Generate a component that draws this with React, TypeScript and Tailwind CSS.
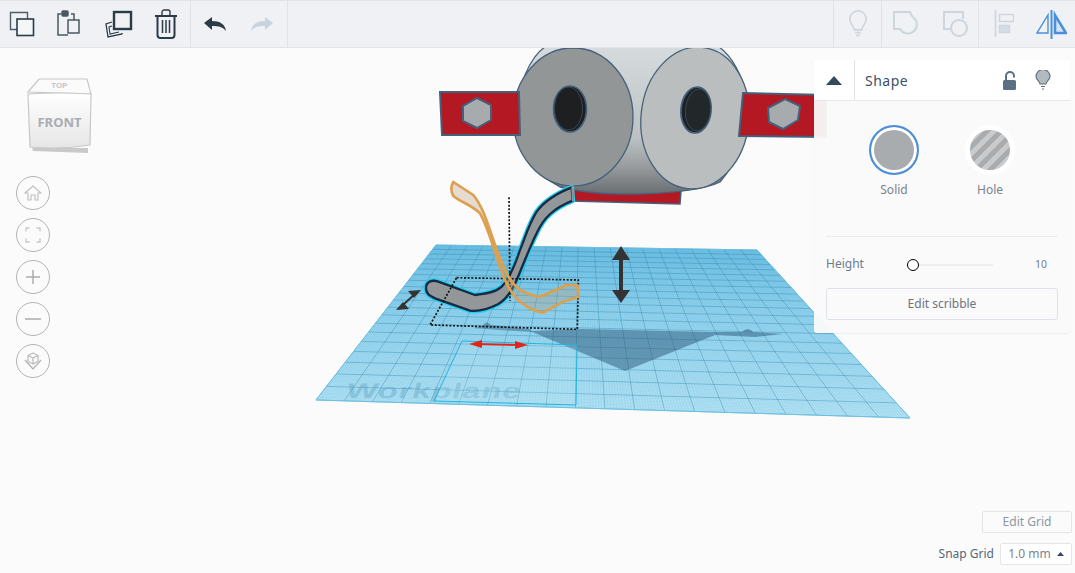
import React from "react";

type P = [number, number];
const Q: P[] = [[436, 245], [757, 250], [910, 418], [316, 400]];
function homography(q: P[]) {
  const [[x0, y0], [x1, y1], [x2, y2], [x3, y3]] = q;
  const dx1 = x1 - x2, dx2 = x3 - x2, sx = x0 - x1 + x2 - x3;
  const dy1 = y1 - y2, dy2 = y3 - y2, sy = y0 - y1 + y2 - y3;
  const d = dx1 * dy2 - dx2 * dy1;
  const g = (sx * dy2 - dx2 * sy) / d;
  const h = (dx1 * sy - sx * dy1) / d;
  const a = x1 - x0 + g * x1, b = x3 - x0 + h * x3, c = x0;
  const e = y1 - y0 + g * y1, f = y3 - y0 + h * y3, i = y0;
  return (u: number, v: number): P => {
    const w = g * u + h * v + 1;
    return [(a * u + b * v + c) / w, (e * u + f * v + i) / w];
  };
}
const map = homography(Q);
const N = 20;
function gridPath(step: number, major: boolean) {
  let s = "";
  for (let k = 0; k <= N * step; k++) {
    const onMajor = k % step === 0;
    if (onMajor !== major) continue;
    const t = k / (N * step);
    const a = map(t, 0), b = map(t, 1), c = map(0, t), d = map(1, t);
    s += `M${a[0].toFixed(1)} ${a[1].toFixed(1)}L${b[0].toFixed(1)} ${b[1].toFixed(1)}M${c[0].toFixed(1)} ${c[1].toFixed(1)}L${d[0].toFixed(1)} ${d[1].toFixed(1)}`;
  }
  return s;
}

const TUBE =
  "M545 52 C505 68 465 90 440 125 C415 165 405 205 390 240 C375 285 360 325 335 350 C315 368 285 372 255 375 L145 335 C125 328 108 335 108 355 C108 372 120 378 135 385 L240 422 C265 425 300 415 325 402 C345 390 362 370 378 335 C395 295 420 230 440 190 C460 145 490 115 548 92 Z";

function Scene() {
  return (
    <svg className="absolute inset-0" width={1075} height={573} viewBox="0 0 1075 573">
      <defs>
        <linearGradient id="body" x1="0" y1="0" x2="0" y2="1">
          <stop offset="0" stopColor="#d6dcde" />
          <stop offset="0.62" stopColor="#bcc1c3" />
          <stop offset="0.82" stopColor="#979b9d" />
          <stop offset="1" stopColor="#686d71" />
        </linearGradient>
        <linearGradient id="plane" x1="0" y1="0" x2="0" y2="1">
          <stop offset="0" stopColor="#7ccbec" />
          <stop offset="0.35" stopColor="#9ad9f2" />
          <stop offset="1" stopColor="#b9e6f6" />
        </linearGradient>
        <linearGradient id="cube" x1="0" y1="0" x2="0" y2="1">
          <stop offset="0" stopColor="#ffffff" />
          <stop offset="1" stopColor="#e6e6e6" />
        </linearGradient>
      </defs>

      {/* workplane */}
      <polygon points={Q.map((p) => p.join(",")).join(" ")} fill="url(#plane)" />
      <path d={gridPath(10, false)} stroke="#3f9cc6" strokeOpacity={0.22} strokeWidth={0.5} fill="none" />
      <path d={gridPath(10, true)} stroke="#2b83ad" strokeOpacity={0.55} strokeWidth={0.8} fill="none" />
      <polygon points={Q.map((p) => p.join(",")).join(" ")} fill="none" stroke="#6cc2e4" strokeWidth={1} />
      <text
        transform="translate(345,398) skewX(-14) scale(1.57,1)"
        fontFamily="Liberation Sans"
        fontWeight="700"
        fontSize={21}
        letterSpacing={0.5}
        fill="#5a9cbc"
        fillOpacity={0.38}
      >
        Workplane
      </text>

      {/* shadow */}
      <path d="M472 328 Q481 327 483 325 Q487 320 491 325 L530 329 L532 332 L500 330 Z" fill="#2c5878" fillOpacity={0.45} />
      <path
        d="M530 331 L582 329 L712 332 L742 332 Q748 326 753 332 L783 334 L755 337 L715 335 L625 371 Z"
        fill="#2c5878"
        fillOpacity={0.5}
      />

      {/* footprint */}
      <polygon points="462,341 577,345 576,405 434,401" fill="#bce8f7" fillOpacity={0.2} stroke="#22b4dc" strokeWidth={1} />

      {/* robot body */}
      <polygon points="572,188 681,191 680,204 572,201" fill="#b31823" stroke="#45607a" strokeWidth={1.5} />
      <path
        d="M525 75 Q533 55 546 46 L718 46 Q740 62 747 100 Q748 150 720 182 Q700 192 640 194 Q590 195 560 187 Q530 170 525 150 Z"
        fill="url(#body)"
        stroke="#47617b"
        strokeWidth={1.3}
      />
      <ellipse cx={695} cy={118} rx={54} ry={71} transform="rotate(6 695 118)" fill="#bbbebf" stroke="#47617b" strokeWidth={1.3} />
      <ellipse cx={573} cy={117} rx={60} ry={69} fill="#939696" stroke="#47617b" strokeWidth={1.3} />
      <ellipse cx={570} cy={109} rx={16.500} ry={23} fill="#1d1f21" stroke="#45607a" strokeWidth={1.6} />
      <ellipse cx={568.500} cy={108.500} rx={14} ry={21.500} fill="#1d1f21" stroke="#3a4f64" strokeWidth={0.8} />
      <ellipse cx={696} cy={110} rx={15} ry={23} transform="rotate(5 696 110)" fill="#1d2124" stroke="#45607a" strokeWidth={1.8} />
      <ellipse cx={698} cy={110} rx={12.500} ry={21} transform="rotate(5 698 110)" fill="#22272a" stroke="#3a4f64" strokeWidth={0.8} />

      {/* tabs */}
      <polygon points="440,92 519,92 520,135 442,135" fill="#b31823" stroke="#45607a" strokeWidth={2} />
      <polygon points="477,98 491,105 491,120 477,128 463,121 463,106" fill="#a7abae" stroke="#45607a" strokeWidth={2} />
      <polygon points="743,93 826,95 826,137 739,136" fill="#b31823" stroke="#45607a" strokeWidth={2} />
      <polygon points="785,99 800,106 798,120 783,129 769,122 768,108" fill="#a7abae" stroke="#45607a" strokeWidth={2} />

      {/* selected scribble, drawn in 3x coordinates */}
      <g transform="translate(390,170) scale(0.3333)">
        <path d={TUBE} fill="#94979a" stroke="#24d0f3" strokeWidth={15} strokeLinejoin="round" />
        <path d={TUBE} fill="#94979a" stroke="#172a40" strokeWidth={7} strokeLinejoin="round" />
        <path d="M547 50 L549 94" stroke="#94979a" strokeWidth={6} />

        {/* dotted guides */}
        <polygon points="200,323 565,330 562,478 120,465" fill="none" stroke="#111" strokeWidth={5} strokeDasharray="6 5" />
        <path d="M357 82 L360 392" stroke="#111" strokeWidth={5} strokeDasharray="6 5" fill="none" />

        {/* ghost */}
        <path
          d="M190 36 L250 75 C275 105 290 150 310 210 C325 255 340 290 358 325 C380 360 410 375 450 380 L530 345 L562 345 L566 380 L520 395 L460 428 C430 425 400 405 378 385 C350 350 335 310 318 255 C300 200 290 165 270 130 C245 105 210 95 190 78 C183 65 183 48 190 36 Z"
          fill="#b89a78"
          fillOpacity={0.33}
          stroke="#dca04f"
          strokeWidth={8}
          strokeLinejoin="round"
        />
      </g>

      {/* arrows */}
      <g fill="#333" stroke="#333">
        <path d="M621 252 L621 297" strokeWidth={4} />
        <polygon points="621,246 630,260 612,260" strokeWidth={0} />
        <polygon points="621,303 630,290 612,290" strokeWidth={0} />
        <path d="M403 305 L416 293" strokeWidth={2} />
        <polygon points="421,290 408,291 414,298" strokeWidth={0} />
        <polygon points="396,310 409,309 403,302" strokeWidth={0} />
      </g>
      <g fill="#e32518" stroke="#e32518">
        <path d="M475 344 L522 345" strokeWidth={2} />
        <polygon points="469,344 482,340 482,348" strokeWidth={0} />
        <polygon points="528,345 515,341 515,349" strokeWidth={0} />
      </g>

      {/* view cube */}
      <polygon points="32,148 88,148 88,153 33,151" fill="#c9c9c9" />
      <polygon points="28,92 39,79 87,79 91,94" fill="#fbfbfb" stroke="#c8c8c8" strokeWidth={1.2} />
      <path d="M28 94 Q60 92 91 94 L90 145 Q60 150 30 147 Z" fill="url(#cube)" stroke="#c8c8c8" strokeWidth={1.2} />
      <text x={59.500} y={88} textAnchor="middle" fontFamily="Liberation Sans" fontSize={8} fontWeight="700" fill="#c4c4c4">TOP</text>
      <text x={59.500} y={127} textAnchor="middle" fontFamily="Noto Sans" fontSize={13} fontWeight="700" fill="#aaadb2">FRONT</text>
    </svg>
  );
}

const IC = "#2b3b47";
function TopIcon({ children, w }: { children: React.ReactNode; w: string }) {
  return <div className={`flex items-center justify-center h-full ${w}`}>{children}</div>;
}

function Toolbar() {
  return (
    <div className="relative z-10 flex h-[48px] shrink-0 items-stretch justify-between border-y border-[#e2e4e8] bg-[#f0f1f5]">
      <div className="flex">
        <div className="flex w-[191px] border-r border-[#dfe2e6]">
          <TopIcon w="w-[44px]">
            <svg width="26" height="26" viewBox="0 0 26 26" fill="none" stroke={IC} strokeWidth="1.400">
              <path d="M8 18.500H1.500V1.500h17V8" stroke="#4f5c66" />
              <rect x="8" y="8" width="16.500" height="16.500" fill="#f5f6f8" strokeWidth="1.600" />
            </svg>
          </TopIcon>
          <TopIcon w="w-[48px]">
            <svg width="24" height="28" viewBox="0 0 24 28" fill="none" stroke="#4a5860" strokeWidth="1.500">
              <path d="M5 4H2v21h10M15 4h3v6" />
              <rect x="6" y="1" width="6" height="5" fill="#4a5860" rx="1" />
              <rect x="12" y="10" width="11" height="13" fill="#f0f1f5" />
            </svg>
          </TopIcon>
          <TopIcon w="w-[52px]">
            <svg width="30" height="30" viewBox="0 0 30 30" fill="none" stroke={IC}>
              <rect x="11" y="3" width="17" height="17" strokeWidth="2.400" fill="#f0f1f5" />
              <path d="M9 13L3 15l2 13 14-3 0-1" strokeWidth="1.300" />
              <path d="M9 17l-3 1 1 7 9-2" strokeWidth="1.100" />
            </svg>
          </TopIcon>
          <TopIcon w="w-[44px]">
            <svg width="24" height="30" viewBox="0 0 24 30" fill="none" stroke={IC} strokeWidth="2">
              <path d="M1 7h22" />
              <path d="M8 6V3c0-1 1-2 2-2h4c1 0 2 1 2 2v3" strokeWidth="1.400" />
              <path d="M3.500 8v18c0 2 1 3 3 3h11c2 0 3-1 3-3V8" />
              <path d="M8.500 11v13M12 11v13M15.500 11v13" strokeWidth="1.500" />
            </svg>
          </TopIcon>
        </div>
        <div className="flex w-[97px] items-center gap-[25px] border-r border-[#dfe2e6] pl-[13px]">
          <svg width="22" height="14" viewBox="0 0 22 14" fill={IC}>
            <path d="M0 6L8 0v4c8 0 13 3 14 10-3-4-7-5-14-5v4z" />
          </svg>
          <svg width="22" height="14" viewBox="0 0 22 14" fill="#c9d3de">
            <path d="M22 6L14 0v4C6 4 1 7 0 14c3-4 7-5 14-5v4z" />
          </svg>
        </div>
      </div>
      <div className="flex">
        <div className="flex w-[49px] items-center justify-center border-x border-[#dfe2e6]">
          <svg width="20" height="28" viewBox="0 0 22 29" fill="none" stroke="#cdd5dd" strokeWidth="1.800">
            <path d="M7 21c0-4-5-6-5-12a9 9 0 0 1 18 0c0 6-5 8-5 12z" />
            <path d="M8 24h6M9 27h4" />
          </svg>
        </div>
        <div className="flex w-[97px] items-center justify-center gap-[24px] border-r border-[#dfe2e6] pl-[2px]">
          <svg width="26" height="26" viewBox="0 0 26 26" fill="none" stroke="#cdd5dd" strokeWidth="2">
            <path d="M1 1h16q1 4 4 6a9 9 0 1 1-14 11H1z" />
          </svg>
          <svg width="26" height="26" viewBox="0 0 26 26" fill="none" stroke="#cdd5dd" strokeWidth="2">
            <path d="M9 18H1V1h19v7" />
            <circle cx="16" cy="17" r="8" />
          </svg>
        </div>
        <div className="flex w-[96px] items-center gap-[22px] pl-[15px] pr-[8px]">
          <svg width="20" height="28" viewBox="0 0 20 28" fill="#d6dde4" stroke="#cdd5dd">
            <path d="M1.500 0v27" strokeWidth="1.600" fill="none" />
            <rect x="5.500" y="4.500" width="14" height="7" fill="none" strokeWidth="1.500" />
            <rect x="5.500" y="15.500" width="10" height="7" strokeWidth="1.500" />
          </svg>
          <svg width="31" height="29" viewBox="0 0 31 29" fill="none" stroke="#4a8fd8">
            <path d="M15.500 0v29" strokeWidth="2" />
            <path d="M12 5v18H1z" strokeWidth="1.400" />
            <path d="M19 5v18h11z" strokeWidth="2.600" fill="#d5e3f3" />
          </svg>
        </div>
      </div>
    </div>
  );
}

function NavButton({ children }: { children: React.ReactNode }) {
  return (
    <div className="flex h-[34px] w-[34px] items-center justify-center rounded-full border border-[#b4b4b4] bg-[#fbfbfb]">
      {children}
    </div>
  );
}

function NavColumn() {
  const stroke = "#bdbdbd";
  return (
    <div className="absolute left-[16px] top-[128px] flex flex-col gap-[8px]">
      <NavButton>
        <svg width="18" height="18" viewBox="0 0 18 18" fill="none" stroke={stroke} strokeWidth="1.100">
          <path d="M1 9l8-7 8 7h-3v7h-3v-5H7v5H4V9z" />
        </svg>
      </NavButton>
      <NavButton>
        <svg width="16" height="16" viewBox="0 0 16 16" fill="none" stroke="#c8c8c8" strokeWidth="1.300">
          <path d="M1 4.500V1h3.500M11.500 1H15v3.500M15 11.500V15h-3.500M4.500 15H1v-3.500" />
        </svg>
      </NavButton>
      <NavButton>
        <svg width="14" height="14" viewBox="0 0 14 14" stroke="#adadad" strokeWidth="1.500">
          <path d="M7 0v14M0 7h14" />
        </svg>
      </NavButton>
      <NavButton>
        <svg width="16" height="4" viewBox="0 0 16 4" stroke="#adadad" strokeWidth="1.500">
          <path d="M0 2h16" />
        </svg>
      </NavButton>
      <NavButton>
        <svg width="20" height="20" viewBox="0 0 20 20" fill="none" stroke="#b5b5b5" strokeWidth="1.100">
          <path d="M10 2l5 2.500v6L10 13l-5-2.500v-6zM5 4.500L10 7l5-2.500M10 7v6" />
          <path d="M2 9l8 9 8-9" strokeWidth="1.400" />
        </svg>
      </NavButton>
    </div>
  );
}

function Panel() {
  return (
    <div className="absolute right-[5px] top-[12px] flex w-[256px] flex-col rounded-[3px] bg-[#fafafa]/95 shadow-[0_1px_2px_rgba(0,0,0,0.06)]">
      <div className="flex h-[41px] items-center border-b border-[#e6e8ec] bg-white">
        <div className="flex h-full w-[41px] items-center justify-center border-r border-[#e0e3e8]">
          <svg width="16" height="9" viewBox="0 0 16 9" fill="#34495e">
            <path d="M8 0l8 9H0z" />
          </svg>
        </div>
        <span className="ml-[10px] flex-1 text-[14px] tracking-[0.5px] text-[#3c5068]">Shape</span>
        <svg width="15" height="19" viewBox="0 0 15 19" fill="none" className="mr-[18px]">
          <path d="M4 9V5a4 4 0 0 1 8 0v1.500" stroke="#5a6f82" strokeWidth="2" />
          <rect x="1" y="9" width="13" height="10" rx="1.500" fill="#5a6f82" />
        </svg>
        <svg width="16" height="20" viewBox="0 0 16 20" fill="#b4b9be" stroke="#5a6f82" strokeWidth="1.100" className="mr-[19px]">
          <path d="M5 14c0-3-4-4-4-7.500a7 7 0 0 1 14 0c0 3.500-4 4.500-4 7.500z" />
          <path d="M6 16.500h4M7 19h2" fill="none" />
        </svg>
      </div>
      <div className="flex flex-col px-[12px] pb-[13px]">
        <div className="flex justify-center gap-[46px] border-b border-[#ebebeb] pb-[38px] pt-[24px]">
          <div className="flex w-[50px] flex-col items-center gap-[7px]">
            <div className="h-[50px] w-[50px] rounded-full border-[2px] border-[#4a8fd8] bg-[#a9acaf] shadow-[inset_0_0_0_3px_#ffffff]" />
            <span className="text-[12px] leading-[16px] text-[#7a838d]">Solid</span>
          </div>
          <div className="flex w-[50px] flex-col items-center gap-[7px]">
            <div className="h-[50px] w-[50px] rounded-full border-[5px] border-white bg-[repeating-linear-gradient(135deg,#a9acaf_0px,#a9acaf_5px,#c8cacc_5px,#c8cacc_10px)]" />
            <span className="text-[12px] leading-[16px] text-[#7a838d]">Hole</span>
          </div>
        </div>
        <div className="mt-[18px] flex h-[20px] items-center">
          <span className="w-[80px] -translate-y-[1px] text-[12px] text-[#6d7a88]">Height</span>
          <div className="relative h-[2px] w-[87px] bg-[#eeeeee]">
            <div className="absolute left-[1px] top-[-5px] h-[12px] w-[12px] rounded-full border border-black bg-white" />
          </div>
          <span className="ml-[42px] text-[10.500px] text-[#767f89]">10</span>
        </div>
        <div className="mt-[13px] flex h-[32px] items-center justify-center rounded-[3px] border border-[#dfe2e8] text-[12px] text-[#6a7582]">
          Edit scribble
        </div>
      </div>
    </div>
  );
}

export default function App() {
  return (
    <div className="relative flex h-[573px] w-[1075px] flex-col overflow-hidden bg-[#fbfbfb] font-['Noto_Sans',sans-serif]">
      <Scene />
      <Toolbar />
      <div className="relative flex-1">
        <NavColumn />
        <Panel />
        <div className="absolute bottom-[8px] right-[3px] flex flex-col items-end gap-[10px]">
          <div className="flex h-[22px] w-[90px] items-center justify-center rounded-[2px] border border-[#e3e5ea] text-[12px] text-[#8c97a3]">
            Edit Grid
          </div>
          <div className="flex items-center gap-[6px]">
            <span className="text-[12px] text-[#54677a]">Snap Grid</span>
            <div className="flex h-[22px] w-[72px] items-center justify-center gap-[6px] rounded-[2px] border border-[#e3e5ea] bg-white text-[12px] text-[#7a8590]">
              1.0 mm
              <svg width="7" height="4" viewBox="0 0 7 4" fill="#34495e">
                <path d="M3.500 0l3.500 4H0z" />
              </svg>
            </div>
          </div>
        </div>
      </div>
    </div>
  );
}
